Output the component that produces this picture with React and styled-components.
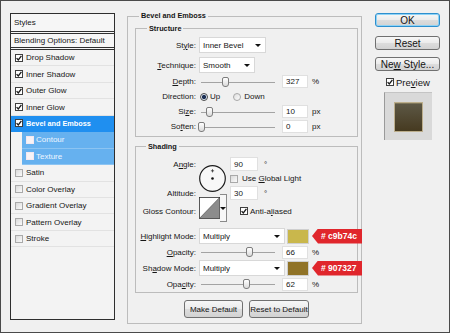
import React from "react";
import styled, { createGlobalStyle, css } from "styled-components";

const GlobalStyle = createGlobalStyle`
  * { box-sizing: border-box; }
  html, body { margin: 0; padding: 0; background: #f0f0f0; }
  body {
    font-family: "Liberation Sans", Arial, sans-serif;
    font-size: 8px;
    color: #161616;
  }
`;

const Window = styled.div`
  width: 450px;
  height: 333px;
  display: flex;
  align-items: flex-start;
  padding: 10px 9px 0;
  border: 1px solid #4a4a4a;
  background: #f0f0f0;
`;

/* left: list of effects */
const StylesPanel = styled.div`
  width: 105px;
  height: 307px;
  flex: none;
  margin-top: 2px;
  border: 1px solid #2e2e2e;
  background: #f3f3f3;
`;

const PanelHead = styled.div`
  height: ${(p) => p.$h}px;
  display: flex;
  align-items: center;
  padding-left: 3px;
  border-bottom: 3px double #303030;
  background: #f6f6f6;
`;

const EffectRow = styled.div`
  height: 16.45px;
  display: flex;
  align-items: center;
  gap: 3px;
  padding-left: 4px;
  border-bottom: 1px solid #e2e2e2;
  white-space: nowrap;
  ${(p) =>
    p.$active &&
    css`
      background: #1f8ff0;
      color: #fff;
      font-weight: bold;
      font-size: 7.3px;
      border-bottom-color: #1f8ff0;
    `}
  ${(p) =>
    p.$sub &&
    css`
      margin-left: 11px;
      gap: 2px;
      background: #66b1ef;
      color: #eef6ff;
      border-bottom-color: #8cc4f2;
    `}
`;

const Box = styled.span`
  flex: none;
  width: 8px;
  height: 8px;
  display: inline-flex;
  align-items: center;
  justify-content: center;
  border: 1px solid ${(p) => (p.$on ? "#3f3f3f" : "#a9a9a9")};
  background: ${(p) => (p.$on ? "#fff" : "linear-gradient(135deg, #d9d9d9, #fbfbfb)")};
  margin-left: ${(p) => p.$ml || 0}px;
  ${(p) =>
    p.$pale &&
    css`
      border-color: #f4e8f0;
      background: #f8f3f6;
    `}
`;

function Check({ on, pale, ml }) {
  return (
    <Box $on={on} $pale={pale} $ml={ml}>
      {on && (
        <svg width="6" height="6" viewBox="0 0 6 6">
          <path d="M0.6 3.1 L2.3 4.9 L5.4 0.8" fill="none" stroke="#1a1a1a" strokeWidth="1.3" />
        </svg>
      )}
    </Box>
  );
}

/* middle: bevel and emboss options */
const Group = styled.fieldset`
  margin: ${(p) => p.$margin || 0};
  min-width: 0;
  border: 1px solid #bcbcbc;
  padding: ${(p) => p.$pad};
  width: ${(p) => (p.$w ? `${p.$w}px` : "auto")};
  flex: none;
`;

const Legend = styled.legend`
  margin-left: ${(p) => p.$ml}px;
  padding: 0 2px;
  font-weight: bold;
  font-size: 7.3px;
  line-height: ${(p) => p.$lh}px;
`;

const Field = styled.div`
  display: grid;
  grid-template-columns: 60px 1fr;
  column-gap: 3px;
  align-items: center;
  height: ${(p) => p.$h || 15}px;
  margin-top: ${(p) => p.$gap || 0}px;
`;

const Label = styled.span`
  text-align: right;
  white-space: nowrap;
`;

const Controls = styled.div`
  display: flex;
  align-items: center;
  min-width: 0;
  white-space: nowrap;
  & > * { flex: none; }
`;

const SelectBox = styled.div`
  width: ${(p) => p.$w}px;
  height: 16px;
  display: flex;
  align-items: center;
  justify-content: space-between;
  padding: 0 4px 0 3px;
  background: #fff;
  border: 1px solid #d8d8d8;
`;

const Caret = styled.span`
  width: 0;
  height: 0;
  border-left: 3px solid transparent;
  border-right: 3px solid transparent;
  border-top: 3px solid #111;
`;

const Track = styled.div`
  position: relative;
  width: 74px;
  height: 12px;
  margin-left: 2px;
  &::before {
    content: "";
    position: absolute;
    left: 0;
    right: 0;
    top: 6px;
    height: 1px;
    background: #a3a3a3;
  }
`;

const Thumb = styled.span`
  position: absolute;
  top: 1px;
  width: 7px;
  height: 10px;
  margin-left: -3.5px;
  border: 1px solid #7d7d7d;
  border-radius: 2px 2px 3px 3px;
  background: linear-gradient(#ffffff, #dadada);
`;

function Slider({ at }) {
  return (
    <Track>
      <Thumb style={{ left: `${at}%` }} />
    </Track>
  );
}

const NumBox = styled.span`
  width: ${(p) => p.$w || 26}px;
  height: ${(p) => p.$h || 13}px;
  margin-left: ${(p) => (p.$ml ?? 7)}px;
  display: flex;
  align-items: center;
  padding-left: 3px;
  background: #fff;
  border: 1px solid #e0e0e0;
`;

const Unit = styled.span`
  margin-left: ${(p) => (p.$ml ?? 4)}px;
`;

const Radio = styled.span`
  width: 8px;
  height: 8px;
  border-radius: 50%;
  margin-left: ${(p) => p.$ml || 0}px;
  border: 1px solid ${(p) => (p.$on ? "#4b4b4b" : "#a8a8a8")};
  background: ${(p) =>
    p.$on
      ? "radial-gradient(circle, #1c2f55 0 1.8px, #dfe8f3 2.4px)"
      : "linear-gradient(135deg, #dedede, #fbfbfb)"};
`;

const Text = styled.span`
  margin-left: ${(p) => p.$ml || 0}px;
`;

const AngleGrid = styled.div`
  display: grid;
  grid-template-columns: 60px 28px 1fr;
  grid-template-rows: 14px 15px 14px 22px;
  column-gap: 3px;
  align-items: center;
`;

const Cell = styled.div`
  grid-column: ${(p) => p.$col};
  grid-row: ${(p) => p.$row};
  align-self: ${(p) => p.$align || "center"};
  display: flex;
  align-items: center;
  justify-content: ${(p) => (p.$right ? "flex-end" : "flex-start")};
  white-space: nowrap;
`;

const ArrowButton = styled.span`
  width: 8px;
  height: 28px;
  display: flex;
  align-items: center;
  justify-content: center;
  background: #f7f7f7;
  border: 1px solid #8a8a8a;
  border-left: none;
`;

const Swatch = styled.span`
  width: 22px;
  height: 15px;
  margin-left: 2px;
  background: ${(p) => p.$color};
  border: 1px solid #cfcfcf;
`;

const HexTag = styled.span`
  width: 50px;
  height: 15px;
  margin-left: 3px;
  display: flex;
  align-items: center;
  padding-left: 9px;
  background: #e0262c;
  color: #fff;
  font-weight: bold;
  font-size: 8.5px;
  clip-path: polygon(6px 0, 100% 0, 100% 100%, 6px 100%, 0 50%);
`;

const ButtonRow = styled.div`
  display: flex;
  justify-content: center;
  gap: 6px;
  margin-top: 7px;
`;

const Button = styled.button`
  width: ${(p) => p.$w}px;
  height: ${(p) => p.$h}px;
  margin-top: ${(p) => p.$mt || 0}px;
  padding: 0;
  font-family: inherit;
  font-size: ${(p) => p.$fs || 8}px;
  color: #141414;
  border: 1px solid #707070;
  border-radius: 3px;
  background: linear-gradient(#f7f7f7 0%, #ebebeb 50%, #dddddd 51%, #d2d2d2 100%);
  ${(p) =>
    p.$primary &&
    css`
      border-color: #2d8fce;
      box-shadow: inset 0 0 0 1px #8fd3f6;
    `}
`;

/* right: dialog buttons and preview */
const SideColumn = styled.div`
  width: 65px;
  flex: none;
  margin: 2px 0 0 13px;
  display: flex;
  flex-direction: column;
`;

const PreviewToggle = styled.div`
  display: flex;
  align-items: center;
  gap: 2px;
  height: 12px;
  margin-top: 5px;
  padding-left: 11px;
  font-size: 9.5px;
`;

const PreviewFrame = styled.div`
  width: 48px;
  height: 48px;
  margin-top: 4px;
  align-self: center;
  display: flex;
  align-items: center;
  justify-content: center;
  background: #d9d9d9;
  border-left: 1px solid #9a9a9a;
  border-top: 1px solid #c4c4c4;
`;

const PreviewTile = styled.div`
  width: 27px;
  height: 28px;
  background: linear-gradient(#5d5846, #463a20);
  box-shadow: 0 0 0 1px #bcae8c, inset 0 1px 0 #7d7559;
`;

const effects = [
  { name: "Drop Shadow", on: true },
  { name: "Inner Shadow", on: true },
  { name: "Outer Glow", on: true },
  { name: "Inner Glow", on: true },
  { name: "Bevel and Emboss", on: true, active: true },
  { name: "Contour", sub: true },
  { name: "Texture", sub: true },
  { name: "Satin" },
  { name: "Color Overlay" },
  { name: "Gradient Overlay" },
  { name: "Pattern Overlay" },
  { name: "Stroke" },
];

function ModeRow({ label, color, hex, gap }) {
  return (
    <Field $h={16} $gap={gap}>
      <Label>{label}</Label>
      <Controls>
        <SelectBox $w={86}>
          Multiply
          <Caret />
        </SelectBox>
        <Swatch $color={color} />
        <HexTag># {hex}</HexTag>
      </Controls>
    </Field>
  );
}

function OpacityRow({ label, value }) {
  return (
    <Field $h={16}>
      <Label>{label}</Label>
      <Controls>
        <Slider at={value} />
        <NumBox>{value}</NumBox>
        <Unit>%</Unit>
      </Controls>
    </Field>
  );
}

export default function App() {
  return (
    <>
      <GlobalStyle />
      <Window>
        <StylesPanel>
          <PanelHead $h={20}>Styles</PanelHead>
          <PanelHead $h={16}>Blending Options: Default</PanelHead>
          {effects.map((fx) => (
            <EffectRow key={fx.name} $active={fx.active} $sub={fx.sub}>
              <Check on={fx.on} pale={fx.sub} />
              {fx.name}
            </EffectRow>
          ))}
        </StylesPanel>

        <Group $w={235} $margin="0 0 0 12px" $pad="3px 3px 5px 7px">
          <Legend $ml={4} $lh={10}>Bevel and Emboss</Legend>

          <Group $pad="4px 0 2px 0">
            <Legend $ml={11} $lh={9}>Structure</Legend>
            <Field $h={16}>
              <Label>St<u>y</u>le:</Label>
              <Controls>
                <SelectBox $w={67}>
                  Inner Bevel
                  <Caret />
                </SelectBox>
              </Controls>
            </Field>
            <Field $h={16} $gap={4}>
              <Label><u>T</u>echnique:</Label>
              <Controls>
                <SelectBox $w={56}>
                  Smooth
                  <Caret />
                </SelectBox>
              </Controls>
            </Field>
            <Field $gap={1}>
              <Label><u>D</u>epth:</Label>
              <Controls>
                <Slider at={33} />
                <NumBox>327</NumBox>
                <Unit>%</Unit>
              </Controls>
            </Field>
            <Field>
              <Label>Direction:</Label>
              <Controls>
                <Radio $on $ml={1} />
                <Text $ml={2}>Up</Text>
                <Radio $ml={13} />
                <Text $ml={3}>Down</Text>
              </Controls>
            </Field>
            <Field>
              <Label>Si<u>z</u>e:</Label>
              <Controls>
                <Slider at={11} />
                <NumBox>10</NumBox>
                <Unit>px</Unit>
              </Controls>
            </Field>
            <Field>
              <Label>So<u>f</u>ten:</Label>
              <Controls>
                <Slider at={0} />
                <NumBox>0</NumBox>
                <Unit>px</Unit>
              </Controls>
            </Field>
          </Group>

          <Group $margin="5px 0 0 0" $pad="6px 0 0 0">
            <Legend $ml={10} $lh={9}>Shading</Legend>
            <AngleGrid>
              <Cell $col={1} $row={1} $right>
                <span>A<u>n</u>gle:</span>
              </Cell>
              <Cell $col={2} $row="1 / 4">
                <svg width="27" height="27" viewBox="0 0 27 27">
                  <circle cx="13.5" cy="13.5" r="12.8" fill="#f8f8f8" stroke="#1e1e1e" strokeWidth="1.2" />
                  <path d="M13.5 4.2 V7.4 M11.9 5.8 H15.1" stroke="#333" strokeWidth="0.8" />
                  <circle cx="13.5" cy="13.5" r="1.3" fill="#111" />
                </svg>
              </Cell>
              <Cell $col={3} $row={1}>
                <NumBox $w={28} $h={14} $ml={0}>90</NumBox>
                <Unit $ml={6}>°</Unit>
              </Cell>
              <Cell $col={3} $row={2}>
                <Check />
                <Text $ml={4}>Use <u>G</u>lobal Light</Text>
              </Cell>
              <Cell $col={1} $row={3} $right>
                Altitude:
              </Cell>
              <Cell $col={3} $row={3}>
                <NumBox $w={28} $h={14} $ml={0}>30</NumBox>
                <Unit $ml={6}>°</Unit>
              </Cell>
              <Cell $col={2} $row="3 / 5" $align="end">
                <svg width="27" height="28" viewBox="0 0 27 28">
                  <rect x="0.5" y="0.5" width="26" height="27" fill="#fff" stroke="#2a2a2a" />
                  <polygon points="1,27 26,1 26,27" fill="#8c8c8c" />
                  <line x1="1" y1="27" x2="26" y2="1" stroke="#4a4a4a" strokeWidth="0.8" />
                </svg>
                <ArrowButton>
                  <Caret />
                </ArrowButton>
              </Cell>
              <Cell $col={1} $row={4} $right>
                Gloss Contour:
              </Cell>
              <Cell $col={3} $row={4}>
                <Check on ml={10} />
                <Text $ml={2}>Anti-a<u>l</u>iased</Text>
              </Cell>
            </AngleGrid>
            <ModeRow label={<><u>H</u>ighlight Mode:</>} color="#c9b74c" hex="c9b74c" gap={6} />
            <OpacityRow label={<><u>O</u>pacity:</>} value={66} />
            <ModeRow label={<>Sh<u>a</u>dow Mode:</>} color="#907327" hex="907327" />
            <OpacityRow label={<>Opa<u>c</u>ity:</>} value={62} />
          </Group>

          <ButtonRow>
            <Button $w={59} $h={18}>Make Default</Button>
            <Button $w={60} $h={18}>Reset to Default</Button>
          </ButtonRow>
        </Group>

        <SideColumn>
          <Button $w={65} $h={14} $fs={10} $primary>OK</Button>
          <Button $w={65} $h={14} $fs={10} $mt={9}>Reset</Button>
          <Button $w={65} $h={14} $fs={10} $mt={7}>
            Ne<u>w</u> Style...
          </Button>
          <PreviewToggle>
            <Check on />
            <span>Pre<u>v</u>iew</span>
          </PreviewToggle>
          <PreviewFrame>
            <PreviewTile />
          </PreviewFrame>
        </SideColumn>
      </Window>
    </>
  );
}
